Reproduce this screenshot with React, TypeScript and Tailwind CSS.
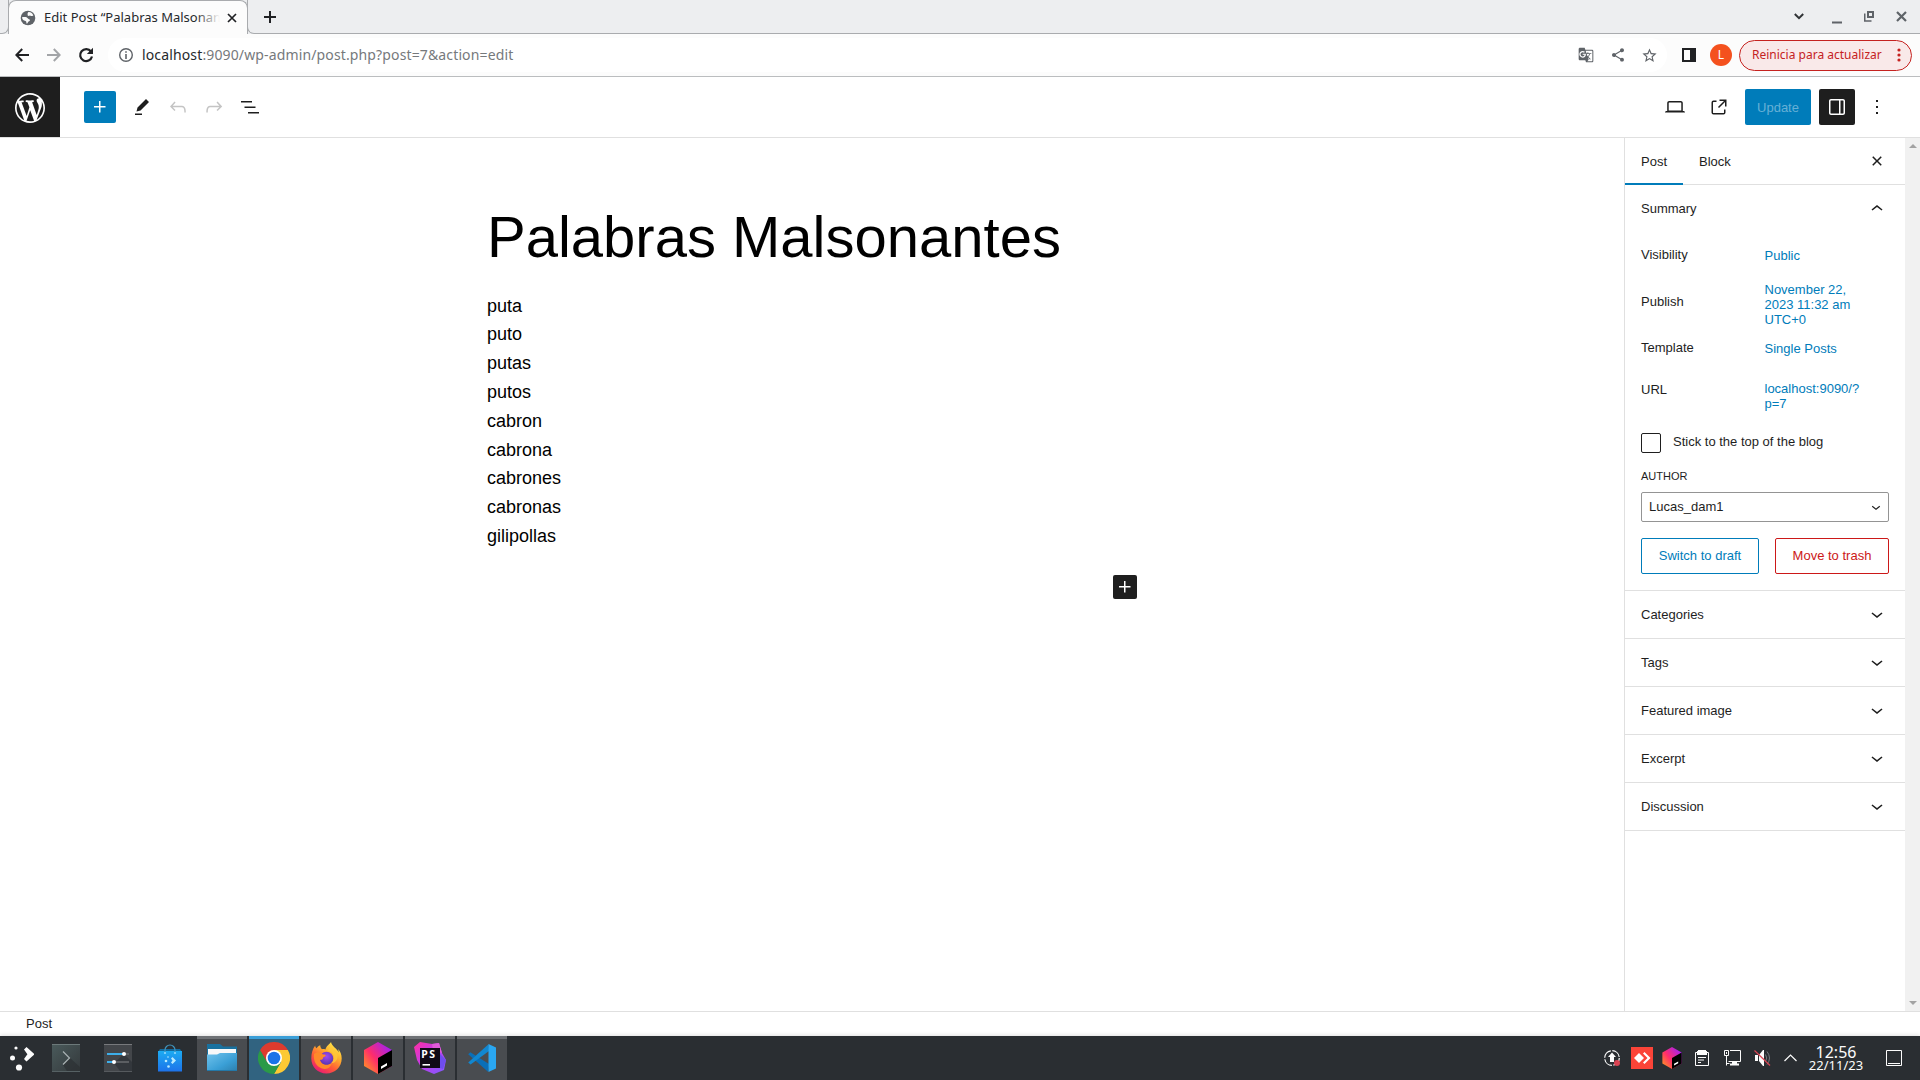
import React from "react";
import { MdGTranslate, MdShare, MdStarBorder } from "react-icons/md";

type GlyphProps = { d: string; size?: number; className?: string; viewBox?: string };

function Glyph({ d, size = 24, className = "", viewBox = "0 0 24 24" }: GlyphProps) {
  return (
    <svg width={size} height={size} viewBox={viewBox} fill="currentColor" className={"shrink-0 " + className}>
      <path d={d} fillRule="evenodd" />
    </svg>
  );
}

const icons = {
  plus: "M11 12.5V17.5H12.5V12.5H17.5V11H12.5V6H11V11H6V12.5H11Z",
  pencil: "m19 7-3-3-8.5 8.5-1 4 4-1L19 7Zm-7 11.5H5V20h7v-1.5Z",
  undo: "M18.3 11.7c-.6-.6-1.4-.9-2.3-.9H6.7l2.9-3.3-1.1-1-4.5 5L8.5 16l1-1-2.7-2.7H16c.5 0 .9.2 1.3.5 1 1 1 3.4 1 4.5v.3h1.5v-.2c0-1.5 0-4.3-1.5-5.7z",
  redo: "M15.6 6.5l-1.1 1 2.9 3.3H8c-.9 0-1.7.3-2.3.9-1.4 1.5-1.4 4.2-1.4 5.6v.2h1.5v-.3c0-1.1 0-3.5 1-4.5.3-.3.7-.5 1.3-.5h9.2L14.5 15l1.1 1.1 4.6-4.6-4.6-5z",
  listView: "M3 6h11v1.5H3V6Zm3.5 5.5h11V13h-11v-1.5ZM21 17H10v1.5h11V17Z",
  desktop: "M20.5 16h-.7V8c0-1.1-.9-2-2-2H6.2c-1.1 0-2 .9-2 2v8h-.7c-.8 0-1.5.7-1.5 1.5h20c0-.8-.7-1.5-1.5-1.5zM5.7 8c0-.3.2-.5.5-.5h11.6c.3 0 .5.2.5.5v7.6H5.7V8z",
  external: "M19.5 4.5h-7V6h4.44l-5.97 5.97 1.06 1.06L18 7.06v4.44h1.5v-7Zm-13 1a2 2 0 0 0-2 2v10a2 2 0 0 0 2 2h10a2 2 0 0 0 2-2v-3H17v3a.5.5 0 0 1-.5.5h-10a.5.5 0 0 1-.5-.5v-10a.5.5 0 0 1 .5-.5h3V5.5h-3Z",
  drawer: "M18 4H6c-1.1 0-2 .9-2 2v12c0 1.1.9 2 2 2h12c1.1 0 2-.9 2-2V6c0-1.1-.9-2-2-2zm-4 14.5H6c-.3 0-.5-.2-.5-.5V6c0-.3.2-.5.5-.5h8v13zm4.5-.5c0 .3-.2.5-.5.5h-2.5v-13H18c.3 0 .5.2.5.5v12z",
  more: "M13 19h-2v-2h2v2zm0-6h-2v-2h2v2zm0-6h-2V5h2v2z",
  down: "M17.5 11.6L12 16l-5.5-4.4.9-1.2L12 14l4.5-3.6 1 1.2z",
  up: "M6.5 12.4L12 8l5.5 4.4-.9 1.2L12 10l-4.5 3.6-1-1.2z",
  close: "M12 13.06l3.712 3.713 1.061-1.06L13.061 12l3.712-3.712-1.06-1.06L12 10.938 8.288 7.227l-1.061 1.06L10.939 12l-3.712 3.712 1.06 1.061L12 13.061z",
  wordpress: "M20 10c0-5.51-4.49-10-10-10C4.48 0 0 4.49 0 10c0 5.52 4.48 10 10 10 5.51 0 10-4.48 10-10zM7.78 15.37L4.37 6.22c.55-.02 1.17-.08 1.17-.08.5-.06.44-1.13-.06-1.11 0 0-1.45.11-2.37.11-.18 0-.37 0-.58-.01C4.12 2.69 6.87 1.11 10 1.11c2.33 0 4.45.87 6.05 2.34-.68-.11-1.65.39-1.65 1.58 0 .74.45 1.36.9 2.1.35.61.55 1.36.55 2.46 0 1.49-1.4 5-1.4 5l-3.03-8.37c.54-.02.82-.17.82-.17.5-.05.44-1.25-.06-1.22 0 0-1.44.12-2.38.12-.87 0-2.33-.12-2.33-.12-.5-.03-.56 1.2-.06 1.22l.92.08 1.26 3.41zM17.41 10c.24-.64.74-1.87.43-4.25.7 1.29 1.05 2.71 1.05 4.25 0 3.29-1.73 6.24-4.4 7.78.97-2.59 1.94-5.2 2.92-7.78zM6.1 18.09C3.12 16.65 1.11 13.53 1.11 10c0-1.3.23-2.48.72-3.59C3.25 10.3 4.67 14.2 6.1 18.09zm4.03-6.63l2.58 6.98c-.86.29-1.76.45-2.71.45-.79 0-1.57-.11-2.29-.33.81-2.38 1.62-4.74 2.42-7.1z",
};

/* ---------- Browser chrome ---------- */

function TabStrip() {
  return (
    <div className="flex h-[34px] bg-[#edeef0]">
      <div className="h-full w-[9px] rounded-br-[7px] border-r border-b border-[#a9abae] bg-[#edeef0]" />
      <div className="-ml-px flex h-[34px] w-[240px] items-center rounded-t-[8px] border border-b-0 border-[#a9abae] bg-[#fcfcfc] pl-[11px]">
        <svg width="16" height="16" viewBox="0 0 16 16" className="shrink-0">
          <circle cx="8" cy="8" r="7.3" fill="#5f6368" />
          <path d="M8.2 2.2c2-.6 4.6 1.5 5.2 3.2-1.2.6-2.6.9-3.6.2-.7.7-2.6.3-2.2-.8.2-.8-.4-1.800.6-2.600z" fill="#fcfcfc" />
          <path d="M2 7.200c2-.5 5.400-.4 6 1.400.4 1 1.900.5 1.900 1.700s-1.700 1-2 2c-.2.800-.7 1.500-1.500 1.200.1-1.700-.3-2.500-1.600-2.700C3 10.400 2.200 9 2 7.200z" fill="#fcfcfc" />
        </svg>
        <div className="relative mb-[2px] ml-[8px] w-[176px] overflow-hidden font-['Noto_Sans'] text-[13px] leading-5 whitespace-nowrap text-[#26292c]">
          Edit Post “Palabras Malsonantes”
          <div className="absolute inset-y-0 right-0 w-6 bg-linear-to-r from-transparent to-[#fcfcfc]" />
        </div>
        <svg width="10" height="10" viewBox="0 0 10 10" className="ml-[7px] shrink-0" stroke="#202124" strokeWidth="1.7">
          <path d="M1 1l8 8M9 1l-8 8" />
        </svg>
      </div>
      <div className="-ml-px flex flex-1 items-center rounded-bl-[7px] border-b border-l border-[#a9abae] pl-[16px]">
        <svg width="12" height="12" viewBox="0 0 12 12" stroke="#202124" strokeWidth="2">
          <path d="M6 0v12M0 6h12" />
        </svg>
        <div className="ml-auto flex items-center pr-[13px] text-[#5f6368]">
          <svg width="10" height="7" viewBox="0 0 10 7" fill="none" stroke="#303336" strokeWidth="2">
            <path d="M.8 1L5 5.200 9.200 1" />
          </svg>
          <svg width="10" height="14" viewBox="0 0 10 14" className="ml-[28px]">
            <path d="M0 11.500h10v2H0z" fill="currentColor" />
          </svg>
          <svg width="10" height="11" viewBox="0 0 10 11" className="ml-[22px]" fill="none" stroke="currentColor">
            <path d="M4 1h5v5H4z" strokeWidth="2" />
            <path d="M.75 2.500v7.500H7.500" strokeWidth="1.500" />
          </svg>
          <svg width="11" height="11" viewBox="0 0 11 11" className="ml-[22px]" stroke="currentColor" strokeWidth="2.200">
            <path d="M1 1l9 9M10 1l-9 9" />
          </svg>
        </div>
      </div>
    </div>
  );
}

function AddressBar() {
  return (
    <div className="flex h-[43px] items-center border-b border-[#bbbdbf] bg-[#fcfcfc] pl-[15px] font-['Noto_Sans']">
      <svg width="14" height="14" viewBox="0 0 14 14" fill="none" stroke="#202124" strokeWidth="2">
        <path d="M14 7H1.500M7.200 1L1.300 7l5.900 6" />
      </svg>
      <svg width="14" height="14" viewBox="0 0 14 14" fill="none" stroke="#a3a5a8" strokeWidth="2" className="ml-[18px]">
        <path d="M0 7h12.500M6.800 1l5.900 6-5.900 6" />
      </svg>
      <svg width="16" height="16" viewBox="0 0 16 16" fill="none" className="ml-[17px]">
        <path d="M13 4.500A6 6 0 1 0 14 9.500" stroke="#202124" strokeWidth="2.200" />
        <path d="M15 .8V7H8.800z" fill="#202124" />
      </svg>
      <div className="ml-[14px] flex h-[34px] flex-1 items-center rounded-full bg-white pl-[11px]">
        <svg width="14" height="14" viewBox="0 0 14 14" className="shrink-0">
          <circle cx="7" cy="7" r="6.300" fill="none" stroke="#5f6368" strokeWidth="1.400" />
          <path d="M6.200 3.200h1.600v1.600H6.200zM6.200 6h1.600v5H6.200z" fill="#5f6368" />
        </svg>
        <div className="ml-[9px] text-[14px] leading-5 tracking-[0.135px] text-[#76797c]">
          <span className="text-[#26292c]">localhost</span>:9090/wp-admin/post.php?post=7&amp;action=edit
        </div>
        <div className="ml-auto flex items-center gap-4 pr-[9px] text-[#5f6368]">
          <MdGTranslate size={16} />
          <MdShare size={16} />
          <MdStarBorder size={17} className="-ml-px" />
        </div>
      </div>
      <svg width="14" height="14" viewBox="0 0 14 14" className="ml-[15px]">
        <path d="M0 0h14v14H0zM2 2v10h6V2z" fill="#202124" fillRule="evenodd" />
      </svg>
      <div className="ml-[14px] flex size-[22px] items-center justify-center rounded-full bg-[#f4511e] text-[12px] text-white">L</div>
      <div className="mr-2 ml-[7px] flex h-[31px] w-[173px] items-center rounded-full border border-[#c5221f] bg-[#f9e9e9] pl-[12px] text-[12px] whitespace-nowrap text-[#c5221f]">
        Reinicia para actualizar
        <svg width="4" height="14" viewBox="0 0 4 14" fill="currentColor" className="ml-auto mr-[10px] shrink-0">
          <circle cx="2" cy="2" r="1.600" />
          <circle cx="2" cy="7" r="1.600" />
          <circle cx="2" cy="12" r="1.600" />
        </svg>
      </div>
    </div>
  );
}

/* ---------- Editor ---------- */

function EditorHeader() {
  return (
    <header className="flex h-[61px] items-center border-b border-[#e0e0e0] bg-white text-[#1e1e1e]">
      <div className="flex h-full w-[60px] items-center justify-center bg-[#1e1e1e] pt-[2px] text-white">
        <Glyph d={icons.wordpress} size={36} viewBox="-2 -2 24 24" />
      </div>
      <button className="ml-6 flex size-8 items-center justify-center rounded-[2px] bg-[#007cba] text-white">
        <Glyph d={icons.plus} />
      </button>
      <div className="ml-[14px] flex items-center gap-3">
        <Glyph d={icons.pencil} />
        <Glyph d={icons.undo} className="text-[#c4c4c4]" />
        <Glyph d={icons.redo} className="text-[#c4c4c4]" />
        <Glyph d={icons.listView} />
      </div>
      <div className="ml-auto flex items-center pr-[31px]">
        <Glyph d={icons.desktop} />
        <Glyph d={icons.external} className="ml-5" />
        <button className="ml-[14px] h-9 w-[66px] rounded-[2px] bg-[#007cba] pt-[2px] text-[13px] text-[#66b0d6]">Update</button>
        <button className="ml-2 flex size-9 items-center justify-center rounded-[2px] bg-[#1e1e1e] text-white">
          <Glyph d={icons.drawer} />
        </button>
        <Glyph d={icons.more} className="ml-[10px]" />
      </div>
    </header>
  );
}

const words = ["puta", "puto", "putas", "putos", "cabron", "cabrona", "cabrones", "cabronas", "gilipollas"];

function Canvas() {
  return (
    <main className="flex-1 bg-white pt-[62px] pl-[487px] text-black">
      <div className="w-[650px]">
        <h1 className="text-[58px] leading-[74px] whitespace-nowrap">Palabras Malsonantes</h1>
        <div className="mt-[17.6px] text-[18px] leading-[28.8px]">
          {words.map((w) => (
            <p key={w}>{w}</p>
          ))}
        </div>
        <div className="mt-[24.4px] flex justify-end">
          <button className="flex size-6 items-center justify-center rounded-[2px] bg-[#1e1e1e] text-white">
            <Glyph d={icons.plus} />
          </button>
        </div>
      </div>
    </main>
  );
}

type RowProps = { label: string; lines: string[]; className: string; labelClass?: string };

function Row({ label, lines, className, labelClass = "" }: RowProps) {
  return (
    <div className={"flex items-start " + className}>
      <span className={"w-[123.5px] shrink-0 leading-[15px] " + labelClass}>{label}</span>
      <span className="leading-[15px] text-[#007cba]">
        {lines.map((l) => (
          <span key={l} className="block">
            {l}
          </span>
        ))}
      </span>
    </div>
  );
}

const panels = ["Categories", "Tags", "Featured image", "Excerpt", "Discussion"];

function Sidebar() {
  return (
    <aside className="flex w-[281px] flex-col border-l border-[#e0e0e0] bg-white text-[13px] leading-[18px] text-[#1e1e1e]">
      <div className="flex h-[47px] border-b border-[#e0e0e0]">
        <div className="-mb-px flex w-[58px] items-center justify-center border-b-2 border-[#007cba] pt-[3px]">Post</div>
        <div className="flex items-center pt-[2px] pl-4">Block</div>
        <Glyph d={icons.close} className="mt-[11px] mr-4 ml-auto" />
      </div>
      <section className="h-[406px] border-b border-[#e0e0e0] px-4">
        <div className="flex h-[48px] items-center justify-between">
          Summary
          <Glyph d={icons.up} />
        </div>
        <div className="h-[181px] pt-[15px]">
          <Row label="Visibility" lines={["Public"]} className="h-[34px]" labelClass="-mt-px" />
          <Row label="Publish" lines={["November 22,", "2023 11:32 am", "UTC+0"]} className="h-[59px]" labelClass="mt-[12px]" />
          <Row label="Template" lines={["Single Posts"]} className="h-[40px]" labelClass="-mt-px" />
          <Row label="URL" lines={["localhost:9090/?", "p=7"]} className="h-[30px]" labelClass="mt-px" />
        </div>
        <div className="mt-[19px] flex">
          <span className="size-5 rounded-[2px] border border-[#1e1e1e]" />
          <span className="ml-[12px]">Stick to the top of the blog</span>
        </div>
        <div className="mt-[14px] text-[11px] leading-[18px]">AUTHOR</div>
        <div className="mt-[7px] flex h-[30px] items-center justify-between rounded-[2px] border border-[#949494] pr-[3px] pl-[7px]">
          Lucas_dam1
          <Glyph d={icons.down} size={18} />
        </div>
        <div className="mt-4 flex gap-4">
          <button className="h-9 w-[118px] rounded-[2px] border border-[#007cba] text-[#007cba]">Switch to draft</button>
          <button className="h-9 w-[114px] rounded-[2px] border border-[#cc1818] text-[#cc1818]">Move to trash</button>
        </div>
      </section>
      {panels.map((p) => (
        <div key={p} className="flex h-12 items-center justify-between border-b border-[#e0e0e0] px-4">
          {p}
          <Glyph d={icons.down} className="mb-px" />
        </div>
      ))}
    </aside>
  );
}

function Scrollbar() {
  return (
    <div className="flex w-[15px] flex-col items-center justify-between bg-[#f1f1f1] pt-[6px] pb-[6px]">
      <svg width="8" height="4" viewBox="0 0 8 4" fill="#a3a3a3">
        <path d="M4 0l4 4H0z" />
      </svg>
      <svg width="8" height="4" viewBox="0 0 8 4" fill="#a3a3a3">
        <path d="M4 4L0 0h8z" />
      </svg>
    </div>
  );
}

/* ---------- Taskbar ---------- */

function LauncherIcon() {
  return (
    <svg width="24" height="26" viewBox="0 0 24 26" fill="#fcfcfc">
      <circle cx="6" cy="3" r="1.600" />
      <circle cx="2.500" cy="13" r="2.500" />
      <circle cx="9" cy="22.500" r="3.100" />
      <path d="M14 4.500l2.500-2.500 8 7.200-8 7.200-2.500-2.500 3.400-4.700z" />
    </svg>
  );
}

function TerminalIcon() {
  return (
    <svg width="28" height="28" viewBox="0 0 28 28">
      <defs>
        <linearGradient id="term" x1="0" y1="0" x2="1" y2="1">
          <stop offset="0" stopColor="#4a5a5b" />
          <stop offset="1" stopColor="#34393c" />
        </linearGradient>
      </defs>
      <path d="M0 0h28v28H0z" fill="url(#term)" />
      <path d="M0 0h28v1H0z" fill="#6c797a" />
      <path d="M0 27h28v1H0z" fill="#566164" />
      <path d="M18 14l10 9v4H15l-4-6z" fill="#2c3133" opacity=".7" />
      <path d="M11 7.500l6.500 6.500-6.500 6.500" fill="none" stroke="#a9b1b3" strokeWidth="1.200" />
    </svg>
  );
}

function SettingsIcon() {
  return (
    <svg width="28" height="28" viewBox="0 0 28 28">
      <path d="M0 0h28v28H0z" fill="#43464a" />
      <path d="M0 0h28v1H0z" fill="#77797c" />
      <path d="M20 10l8 8v9H16l-6-8z" fill="#303338" opacity=".8" />
      <path d="M0 27h28v1H0z" fill="#565a5e" />
      <path d="M3 9h17v2H3zM3 17h7v2H3z" fill="#3daee9" />
      <path d="M20 9h5v2h-5zM10 17h15v2H10z" fill="#5b5e62" />
      <circle cx="20" cy="10" r="2" fill="#fff" />
      <circle cx="10" cy="18" r="2" fill="#fff" />
    </svg>
  );
}

function DiscoverIcon() {
  return (
    <svg width="24" height="28" viewBox="0 0 24 28">
      <defs>
        <linearGradient id="bag" x1="0" y1="0" x2="0" y2="1">
          <stop offset="0" stopColor="#1cabf2" />
          <stop offset="1" stopColor="#1d73ea" />
        </linearGradient>
      </defs>
      <path d="M2 5h20l2 3H0z" fill="#136a9e" />
      <path d="M0 7h24v20.500H0z" fill="url(#bag)" />
      <path d="M7 9V6a5 5 0 0 1 10 0v3" fill="none" stroke="#3f94bd" strokeWidth="1.200" />
      <circle cx="7" cy="9" r="1.100" fill="#8fd8ff" />
      <circle cx="17" cy="9" r="1.100" fill="#8fd8ff" />
      <g fill="#b8eaff">
        <circle cx="10" cy="13" r=".8" />
        <circle cx="8" cy="17" r="1.300" />
        <circle cx="10.500" cy="22.500" r="1.300" />
        <path d="M13 14.500l1.500-1.500 3.500 3.500-3.500 3.500-1.500-1.500 1.500-2z" />
      </g>
    </svg>
  );
}

function FolderIcon() {
  return (
    <svg width="30" height="28" viewBox="0 0 30 28">
      <defs>
        <linearGradient id="fold" x1="0" y1="0" x2="1" y2="1">
          <stop offset="0" stopColor="#70c3ec" />
          <stop offset=".6" stopColor="#3a9fd6" />
          <stop offset="1" stopColor="#2d7fad" />
        </linearGradient>
      </defs>
      <path d="M0 0h13l3 2.500h14V12H0z" fill="#19719f" />
      <path d="M1 5h28v8H1z" fill="#f7f8f9" />
      <path d="M0 10.500h10L13 9h17v18H0z" fill="url(#fold)" />
      <path d="M0 26h30v1H0z" fill="#2478a8" />
    </svg>
  );
}

function ChromeIcon() {
  return (
    <svg width="32" height="32" viewBox="0 0 32 32">
      <path d="M16 16L2.140 8A16 16 0 0 1 29.860 8z" fill="#dd3b2e" />
      <path d="M16 8h13.860A16 16 0 0 1 16 32l6.930-12z" fill="#fcc934" />
      <path d="M9.070 20L2.140 8A16 16 0 0 0 16 32l6.930-12z" fill="#2b9a48" />
      <path d="M2.140 8L9.070 20 16 8z" fill="#dd3b2e" />
      <circle cx="16" cy="16" r="8" fill="#fff" />
      <circle cx="16" cy="16" r="6.300" fill="#1a73e8" />
    </svg>
  );
}

function FirefoxIcon() {
  return (
    <svg width="31" height="32" viewBox="0 0 31 32">
      <defs>
        <linearGradient id="ffBody" x1=".85" y1="0" x2=".2" y2="1">
          <stop offset="0" stopColor="#fff44f" />
          <stop offset=".35" stopColor="#ffb02e" />
          <stop offset=".65" stopColor="#ff5a36" />
          <stop offset="1" stopColor="#e8127c" />
        </linearGradient>
        <radialGradient id="ffCore" cx=".5" cy=".35" r=".6">
          <stop offset="0" stopColor="#a14bf0" />
          <stop offset="1" stopColor="#5b36b5" />
        </radialGradient>
      </defs>
      <path d="M20 0c-1 2-5 4-5.500 7.500C13 7 12 7 11 7.200 9.700 6.200 9.200 4.500 9.300 3.300 7.500 4 6.300 5.200 5.500 6.200 4.500 5.500 4.200 4.300 4.200 3.500 1.500 7 .3 11.500.3 16.500.3 25 7 31.500 15.400 31.500c8.500 0 15.300-6.500 15.300-15 0-4-1.500-7.500-3.700-9.500.5 1.300.7 2.500.7 3.500C26 6 21 5 20 0z" fill="url(#ffBody)" />
      <circle cx="15.500" cy="16.500" r="6.800" fill="url(#ffCore)" />
      <path d="M3 12c2.500-2 5.500-2 7.500-1 .5 1 1.500 1.500 3 1.600 2 .2 1.700 1.900-1.500 3 0 2.500-1.500 2-3 2.500 1 5 8 6.500 12 2.400-1 5-5 7.500-10 6C5.500 24.500 2 19 3 12z" fill="#ff8a2a" />
      <path d="M17 9c3 0 5 2 5.500 4.500.8 3-.2 6-2.500 7.800 4 0 7-3.500 6.500-8C25 9 21 8 20 5c-1.500 1-2.500 2.500-3 4z" fill="#ffc83a" opacity=".8" />
    </svg>
  );
}

function CubeIcon({ size, uid }: { size: number; uid: string }) {
  return (
    <svg width={size} height={size} viewBox="0 0 32 32">
      <defs>
        <linearGradient id={uid + "a"} x1="0" y1=".9" x2=".9" y2=".1">
          <stop offset="0" stopColor="#ff9a1f" />
          <stop offset=".45" stopColor="#ff2d6b" />
          <stop offset="1" stopColor="#a020f5" />
        </linearGradient>
      </defs>
      <path d="M16 0l14 8v16l-14 8-14-8V8z" fill={"url(#" + uid + "a)"} />
      <path d="M30 8v16l-14 8V16z" fill="#000" />
      <path d="M19 24.500l6-3.500v2.500l-6 3.500z" fill="#fff" />
    </svg>
  );
}

function PhpStormIcon() {
  return (
    <svg width="32" height="32" viewBox="0 0 32 32">
      <defs>
        <linearGradient id="ps" x1="0" y1="0" x2="1" y2="1">
          <stop offset="0" stopColor="#ff2fa0" />
          <stop offset=".45" stopColor="#c63bea" />
          <stop offset="1" stopColor="#7a5cff" />
        </linearGradient>
      </defs>
      <path d="M0 5l6-5 12 2 7-1 3 10 4 7-2 10-10 4-12-5-5-9z" fill="url(#ps)" />
      <path d="M18 2l7-1 3 10-9-3z" fill="#e05bd8" />
      <path d="M26 12l6 6-3 9-3-1z" fill="#6e4dee" />
      <path d="M6 6h20v20H6z" fill="#100a16" />
      <text x="7.300" y="16" fontFamily="'Noto Sans', sans-serif" fontWeight="700" fontSize="10.500" fill="#fff" textLength="13.800">
        PS
      </text>
      <path d="M8.500 22h7.500v1.600H8.500z" fill="#fff" />
    </svg>
  );
}

function VsCodeIcon() {
  return (
    <svg width="28" height="28" viewBox="0 0 28 28">
      <path d="M2.300 8.200L.2 10.200l19.800 17.500L21 20z" fill="#0a6fb8" />
      <path d="M20.500.3L.2 18.400l2.400 2.100L21 7z" fill="#1187d0" />
      <path d="M20.500 0L28 3.400v21.200L20.500 28z" fill="#2aa7f2" />
    </svg>
  );
}

const tasks = [
  { key: "files", node: <FolderIcon />, active: false },
  { key: "chrome", node: <ChromeIcon />, active: true },
  { key: "firefox", node: <FirefoxIcon />, active: false },
  { key: "toolbox", node: <CubeIcon size={32} uid="task" />, active: false },
  { key: "phpstorm", node: <PhpStormIcon />, active: false },
  { key: "vscode", node: <VsCodeIcon />, active: false },
];

function Tray() {
  return (
    <div className="ml-auto flex items-center text-[#fcfcfc]">
      <svg width="16" height="16" viewBox="0 0 16 16">
        <circle cx="8" cy="8" r="7.300" fill="none" stroke="currentColor" strokeWidth="1.200" strokeDasharray="10 1.500" />
        <path d="M8 2.500l4 4.500h-2v5H6V7H4z" fill="currentColor" />
        <circle cx="13" cy="13" r="3" fill="#da4453" />
      </svg>
      <svg width="22" height="22" viewBox="0 0 22 22" className="ml-[11px]">
        <path d="M0 0h22v22H0z" fill="#fb4438" />
        <path d="M3 11l5-5 5 5-5 5z" fill="#fff" />
        <path d="M12 6.500l1.500-1.500 6 6-6 6-1.500-1.500 4.500-4.500z" fill="#fff" />
      </svg>
      <div className="ml-[8px]">
        <CubeIcon size={22} uid="tray" />
      </div>
      <svg width="14" height="16" viewBox="0 0 14 16" className="ml-[12px]">
        <path d="M.5 2.500h13v13H.5z" fill="none" stroke="currentColor" />
        <path d="M2 1h1V0h8v1h1v4H2z" fill="currentColor" />
        <path d="M3 7h8v1H3zM3 9.500h6v1H3zM3 12h3v1H3z" fill="currentColor" />
      </svg>
      <svg width="17" height="16" viewBox="0 0 17 16" className="ml-[15px]" fill="none" stroke="currentColor">
        <path d="M.5.5h4v5h-4zM2.500 5.500v10M2.500 13.500h3M6 .5h10.500v11H4.500" />
        <path d="M8 11.500h5v2h2v2H6v-2h2z" fill="currentColor" stroke="none" />
        <path d="M2.500 2v2" />
      </svg>
      <svg width="17" height="16" viewBox="0 0 17 16" className="ml-[13px]">
        <path d="M1 5h3v6H1zM5 5l4-5h1v16H9l-4-5z" fill="currentColor" />
        <path d="M11.500 4.500q2.500 3.500 0 7M13 1.500q5 6.500 0 13" fill="none" stroke="#75797d" />
        <path d="M.5.5l15.500 15" stroke="#da4453" strokeWidth="1.200" />
      </svg>
      <svg width="13" height="8" viewBox="0 0 13 8" className="ml-[13px]" fill="none" stroke="currentColor" strokeWidth="1.200">
        <path d="M.5 7l6-6 6 6" />
      </svg>
      <div className="ml-[11px] flex w-[56px] flex-col items-center font-['Noto_Sans'] whitespace-nowrap">
        <span className="text-[16px] leading-[14px]">12:56</span>
        <span className="text-[13px] leading-[13px]">22/11/23</span>
      </div>
      <svg width="16" height="16" viewBox="0 0 16 16" className="mr-[18px] ml-[22px]" fill="none" stroke="currentColor">
        <path d="M.5.5h15v15H.5zM2 13.500h12" />
      </svg>
    </div>
  );
}

function Taskbar() {
  return (
    <footer className="relative flex h-11 items-center bg-[#2a2e32] shadow-[0_-1px_4px_rgba(0,0,0,0.12)]">
      <div className="flex items-center pl-[10px]">
        <LauncherIcon />
        <div className="ml-[18px]">
          <TerminalIcon />
        </div>
        <div className="ml-[24px]">
          <SettingsIcon />
        </div>
        <div className="ml-[26px]">
          <DiscoverIcon />
        </div>
      </div>
      <div className="ml-[15px] flex h-full gap-[2px]">
        {tasks.map((t) => (
          <div
            key={t.key}
            className={
              "flex h-full w-[50px] items-center justify-center border-t-[3px] pb-[3px] " +
              (t.active ? "border-[#3b9fd8] bg-[#316380]" : "border-[#6e7175] bg-[#494c50]")
            }
          >
            {t.node}
          </div>
        ))}
      </div>
      <Tray />
    </footer>
  );
}

export default function App() {
  return (
    <div className="flex h-[1080px] w-[1920px] flex-col overflow-hidden bg-white font-['Liberation_Sans',Arial,sans-serif]">
      <TabStrip />
      <AddressBar />
      <EditorHeader />
      <div className="flex h-[873px]">
        <Canvas />
        <Sidebar />
        <Scrollbar />
      </div>
      <div className="flex h-[25px] items-center border-t border-[#e0e0e0] pl-[26px] text-[13px] text-[#1e1e1e]">Post</div>
      <Taskbar />
    </div>
  );
}
